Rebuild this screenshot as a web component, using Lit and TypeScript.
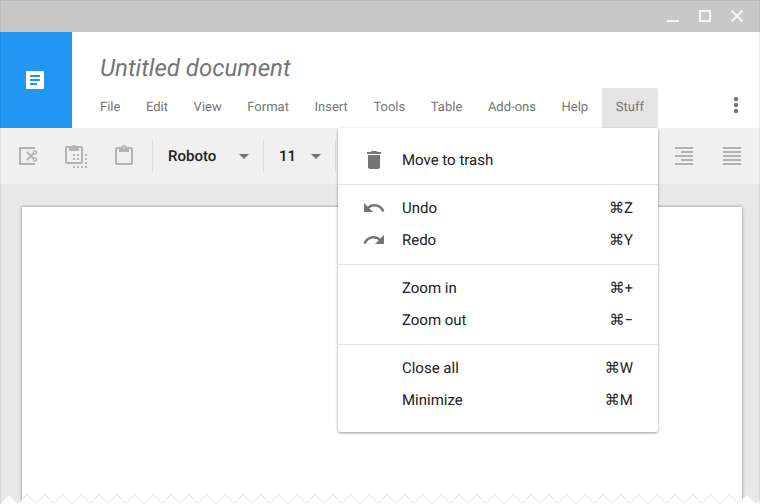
import { LitElement, html, css, svg, nothing, type TemplateResult } from "lit";
import { customElement, property } from "lit/decorators.js";

type Item = { label: string; keys?: string; icon?: TemplateResult };

const trash = svg`<path d="M6 19c0 1.1.9 2 2 2h8c1.1 0 2-.9 2-2V7H6v12zM19 4h-3.500l-1-1h-5l-1 1H5v2h14V4z"/>`;
const undo = svg`<path d="M12.500 8c-2.650 0-5.050.990-6.900 2.600L2 7v9h9l-3.620-3.620c1.390-1.160 3.160-1.880 5.120-1.880 3.540 0 6.550 2.310 7.600 5.500l2.370-.780C21.080 11.030 17.150 8 12.500 8z"/>`;
const redo = svg`<path d="M18.400 10.600C16.550 8.990 14.150 8 11.500 8c-4.650 0-8.580 3.030-9.960 7.220L3.900 16c1.050-3.190 4.050-5.500 7.600-5.500 1.950 0 3.730.720 5.120 1.880L13 16h9V7l-3.600 3.600z"/>`;

const groups: Item[][] = [
  [{ label: "Move to trash", icon: trash }],
  [
    { label: "Undo", keys: "⌘Z", icon: undo },
    { label: "Redo", keys: "⌘Y", icon: redo },
  ],
  [
    { label: "Zoom in", keys: "⌘+" },
    { label: "Zoom out", keys: "⌘−" },
  ],
  [
    { label: "Close all", keys: "⌘W" },
    { label: "Minimize", keys: "⌘M" },
  ],
];

const menus = ["File", "Edit", "View", "Format", "Insert", "Tools", "Table", "Add-ons", "Help"];

@customElement("drop-menu")
class DropMenu extends LitElement {
  @property({ attribute: false }) groups: Item[][] = [];

  static styles = css`
    :host {
      display: block;
      box-sizing: border-box;
      padding: 8px 0;
      background: #fff;
      border-radius: 2px;
      box-shadow: 0 1px 3px rgba(0, 0, 0, 0.4);
    }
    .group {
      padding: 8px 0;
    }
    .group + .group {
      padding-top: 7px;
      border-top: 1px solid #e4e4e4;
    }
    .item {
      display: flex;
      align-items: center;
      width: 100%;
      height: 32px;
      padding: 0 25px 0 24px;
      border: 0;
      background: none;
      font: 400 15px/32px Roboto, sans-serif;
      text-rendering: geometricPrecision;
      color: #212121;
      text-align: left;
    }
    .item:hover {
      background: #eee;
    }
    .icon {
      width: 24px;
      height: 24px;
      margin-right: 16px;
      fill: #757575;
    }
    .label {
      flex: 1;
    }
  `;

  render() {
    return html`${this.groups.map(
      (group) => html`<div class="group" role="group">
        ${group.map(
          (item) => html`<button class="item" role="menuitem">
            <svg class="icon" viewBox="0 0 24 24" aria-hidden="true">${item.icon ?? nothing}</svg>
            <span class="label">${item.label}</span>
            <span>${item.keys ?? nothing}</span>
          </button>`
        )}
      </div>`
    )}`;
  }
}

@customElement("app-root")
class AppRoot extends LitElement {
  static styles = css`
    :host {
      display: flex;
      flex-direction: column;
      position: relative;
      min-height: 100vh;
      background: #e8e8e8;
      font-family: Roboto, sans-serif;
      text-rendering: geometricPrecision;
      color: #757575;
    }
    :host::after {
      content: "";
      position: absolute;
      inset: 0;
      border: 1px solid rgba(0, 0, 0, 0.07);
      border-bottom: 0;
      pointer-events: none;
    }
    button {
      border: 0;
      padding: 0;
      background: none;
      color: inherit;
      font: inherit;
      text-rendering: inherit;
    }
    svg {
      display: block;
    }
    .titlebar {
      display: flex;
      justify-content: flex-end;
      align-items: center;
      gap: 8px;
      height: 32px;
      padding-right: 11px;
      background: #c8c8c8;
    }
    .stroke {
      fill: none;
      stroke: #f5f5f5;
      stroke-width: 2;
    }
    .header {
      display: flex;
      height: 96px;
      background: #fff;
    }
    .logo {
      display: grid;
      place-items: center;
      width: 72px;
      padding-right: 2px;
      box-sizing: border-box;
      background: #2196f3;
    }
    .heading {
      flex: 1;
      display: flex;
      flex-direction: column;
      justify-content: space-between;
      padding: 20px 0 0 16px;
    }
    .title {
      width: 400px;
      height: 32px;
      margin-left: 12px;
      padding: 0;
      border: 0;
      outline: 0;
      background: none;
      font: italic 400 24px/32px Roboto, sans-serif;
      text-rendering: inherit;
      color: #757575;
    }
    .menubar {
      display: flex;
      justify-content: space-between;
      max-width: 570px;
    }
    .menu {
      height: 40px;
      padding: 0 12px 1px;
      font-size: 13px;
      line-height: 36px;
    }
    .open {
      position: relative;
      z-index: 1;
    }
    .open .menu {
      padding: 0 14px 1px;
      background: #e5e5e5;
      border-radius: 2px 2px 0 0;
    }
    .popup {
      position: absolute;
      top: 100%;
      right: 0;
      width: 320px;
    }
    .more {
      align-self: flex-end;
      width: 24px;
      height: 24px;
      margin: 0 12px 11px 0;
    }
    .toolbar {
      display: flex;
      align-items: center;
      height: 56px;
      padding: 0 16px;
      background: #f0f0f0;
      box-sizing: border-box;
    }
    .clip,
    .align {
      display: flex;
      gap: 24px;
    }
    .align {
      margin-left: auto;
    }
    .glyph {
      fill: #b3b3b3;
    }
    .line {
      fill: none;
      stroke: #b3b3b3;
      stroke-width: 2;
    }
    .picker {
      display: flex;
      align-items: center;
      position: relative;
      height: 32px;
      border-left: 1px solid #dcdcdc;
    }
    .clip + .picker {
      margin-left: 16px;
    }
    .picker.last {
      border-right: 1px solid #dcdcdc;
    }
    .select {
      appearance: none;
      width: 110px;
      height: 32px;
      padding: 0 0 0 15px;
      border: 0;
      background: none;
      font: 500 15px/32px Roboto, sans-serif;
      text-rendering: inherit;
      color: #212121;
    }
    .last .select {
      width: 71px;
    }
    .caret {
      position: absolute;
      right: 14px;
      fill: #757575;
      pointer-events: none;
    }
    .canvas {
      flex: 1;
      display: flex;
      padding: 23px 18px 0 22px;
    }
    .sheet {
      flex: 1;
      background: #fff;
      box-shadow: 0 0 3px rgba(0, 0, 0, 0.45);
    }
    .torn {
      position: absolute;
      bottom: 0;
      width: 100%;
      height: 10px;
    }
    .tooth {
      fill: #fff;
      stroke: #e0e0e0;
    }
  `;

  render() {
    return html`
      <div class="titlebar">
        <button aria-label="Minimize window">
          <svg width="24" height="24" class="stroke"><path d="M6 17h12" /></svg>
        </button>
        <button aria-label="Maximize window">
          <svg width="24" height="24" class="stroke"><path d="M7 7h10v10H7z" /></svg>
        </button>
        <button aria-label="Close window">
          <svg width="24" height="24" class="stroke"><path d="M6.500 6.500l11 11m0-11l-11 11" /></svg>
        </button>
      </div>
      <header class="header">
        <div class="logo">
          <svg width="24" height="24" fill="#fff">
            <path fill-rule="evenodd" d="M4 3h16a1 1 0 0 1 1 1v16a1 1 0 0 1-1 1H4a1 1 0 0 1-1-1V4a1 1 0 0 1 1-1zM7 7v2h10V7zM7 11v2h10v-2zM7 15v2h7v-2z" />
          </svg>
        </div>
        <div class="heading">
          <input class="title" aria-label="Document title" value="Untitled document" />
          <nav class="menubar">
            ${menus.map((m) => html`<button class="menu">${m}</button>`)}
            <div class="open">
              <button class="menu" aria-expanded="true">Stuff</button>
              <drop-menu class="popup" role="menu" .groups=${groups}></drop-menu>
            </div>
          </nav>
        </div>
        <button class="more" aria-label="More options">
          <svg width="24" height="24" fill="#757575">
            <circle cx="12" cy="6" r="2.200" /><circle cx="12" cy="12" r="2.200" /><circle cx="12" cy="18" r="2.200" />
          </svg>
        </button>
      </header>
      <div class="toolbar">
        <div class="clip">
          <button aria-label="Cut">
            <svg width="24" height="24" class="line">
              <path d="M19 4H4v16h15" />
              <path d="M11 8l7 7M11 16l7-7" stroke-width="1.800" />
              <circle cx="19" cy="8.500" r="1.600" stroke-width="1.300" /><circle cx="19" cy="15.500" r="1.600" stroke-width="1.300" />
            </svg>
          </button>
          <button aria-label="Copy">
            <svg width="24" height="24" viewBox="0 0 24 24" overflow="visible">
              <rect class="line" x="2" y="3" width="16" height="16" rx="1" />
              <path class="glyph" d="M5 3h2.500a2.600 2.600 0 0 1 5 0H15v4H5z" />
              <path class="glyph" d="M9 10h2v2H9zM13 10h2v2h-2zM9 14h2v2H9zM13 14h2v2h-2zM21 10h2v2h-2zM21 14h2v2h-2zM21 18h2v2h-2zM9 22h2v2H9zM13 22h2v2h-2zM17 22h2v2h-2zM21 22h2v2h-2z" />
            </svg>
          </button>
          <button aria-label="Paste">
            <svg width="24" height="24">
              <rect class="line" x="4" y="4" width="16" height="16" rx="1" />
              <path class="glyph" d="M7 3h2.500a2.600 2.600 0 0 1 5 0H17v5H7z" />
              <circle cx="12" cy="4" r="1" fill="#ddd" />
            </svg>
          </button>
        </div>
        <div class="picker">
          <select class="select" aria-label="Font"><option>Roboto</option></select>
          <svg class="caret" width="10" height="5"><path d="M0 0h10L5 5z" /></svg>
        </div>
        <div class="picker last">
          <select class="select" aria-label="Font size"><option>11</option></select>
          <svg class="caret" width="10" height="5"><path d="M0 0h10L5 5z" /></svg>
        </div>
        <div class="align">
          <button aria-label="Align right">
            <svg width="24" height="24" class="glyph">
              <path d="M3 3h18v2H3zM9 7h12v2H9zM3 11h18v2H3zM9 15h12v2H9zM3 19h18v2H3z" />
            </svg>
          </button>
          <button aria-label="Justify">
            <svg width="24" height="24" class="glyph">
              <path d="M3 3h18v2H3zM3 7h18v2H3zM3 11h18v2H3zM3 15h18v2H3zM3 19h18v2H3z" />
            </svg>
          </button>
        </div>
      </div>
      <main class="canvas"><div class="sheet"></div></main>
      <svg class="torn" aria-hidden="true">
        <defs>
          <pattern id="teeth" width="18" height="10" patternUnits="userSpaceOnUse">
            <path class="tooth" d="M-1 10.500L9 .500l10 10" />
          </pattern>
        </defs>
        <rect width="100%" height="10" fill="url(#teeth)" />
      </svg>
    `;
  }
}
